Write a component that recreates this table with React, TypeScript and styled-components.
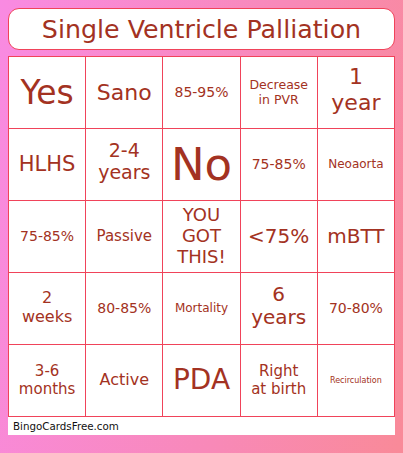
import React from 'react';
import styled, { createGlobalStyle } from 'styled-components';

const GlobalStyle = createGlobalStyle`
  html, body {
    margin: 0;
    padding: 0;
  }
  body {
    width: 403px;
    height: 453px;
    overflow: hidden;
    background: linear-gradient(100deg, #f98ae2 0%, #f889b8 60%, #f98a98 100%);
    font-family: "DejaVu Sans", "Liberation Sans", sans-serif;
  }
`;

const Card = styled.div`
  padding: 8px 8px 0 8px;
  display: flex;
  flex-direction: column;
`;

const Title = styled.div`
  height: 40px;
  background: #fff;
  border: 1px solid #f0435a;
  border-radius: 11px;
  display: flex;
  align-items: center;
  justify-content: center;
  color: #a33222;
  font-size: 25.3px;
  margin-bottom: 6px;
`;

const Grid = styled.div`
  display: grid;
  grid-template-columns: repeat(5, 1fr);
  grid-auto-rows: 72px;
  border-top: 1px solid #f0435a;
  border-left: 1px solid #f0435a;
  background: #fff;
`;

const Cell = styled.div<{ $size: number; $lift?: number }>`
  border-right: 1px solid #f0435a;
  border-bottom: 1px solid #f0435a;
  display: flex;
  align-items: center;
  justify-content: center;
  text-align: center;
  color: #a33222;
  font-size: ${p => p.$size}px;
  line-height: 1.15;
  padding: 0 2px ${p => p.$lift ?? 0}px;
  overflow: hidden;
`;

const Footer = styled.div`
  background: #fff;
  height: 18px;
  font-size: 10.3px;
  color: #111;
  padding-left: 5px;
  display: flex;
  align-items: center;
`;

type Entry = { text: React.ReactNode; size: number; lift?: number };

const cells: Entry[] = [
  { text: 'Yes', size: 33 },
  { text: 'Sano', size: 22 },
  { text: '85-95%', size: 14 },
  { text: <>Decrease<br />in PVR</>, size: 12.5 },
  { text: <>1<br />year</>, size: 22, lift: 6 },
  { text: 'HLHS', size: 21 },
  { text: <>2-4<br />years</>, size: 19, lift: 6 },
  { text: 'No', size: 45 },
  { text: '75-85%', size: 14 },
  { text: 'Neoaorta', size: 12 },
  { text: '75-85%', size: 14 },
  { text: 'Passive', size: 15 },
  { text: <>YOU<br />GOT<br />THIS!</>, size: 18 },
  { text: '<75%', size: 20 },
  { text: 'mBTT', size: 20 },
  { text: <>2<br />weeks</>, size: 16, lift: 2 },
  { text: '80-85%', size: 14 },
  { text: 'Mortality', size: 12 },
  { text: <>6<br />years</>, size: 20, lift: 6 },
  { text: '70-80%', size: 14 },
  { text: <>3-6<br />months</>, size: 15 },
  { text: 'Active', size: 16 },
  { text: 'PDA', size: 28 },
  { text: <>Right<br />at birth</>, size: 15 },
  { text: 'Recirculation', size: 8 },
];

export default function App() {
  return (
    <>
      <GlobalStyle />
      <Card>
        <Title>Single Ventricle Palliation</Title>
        <Grid>
          {cells.map((c, i) => (
            <Cell key={i} $size={c.size} $lift={c.lift}>{c.text}</Cell>
          ))}
        </Grid>
        <Footer>BingoCardsFree.com</Footer>
      </Card>
    </>
  );
}
